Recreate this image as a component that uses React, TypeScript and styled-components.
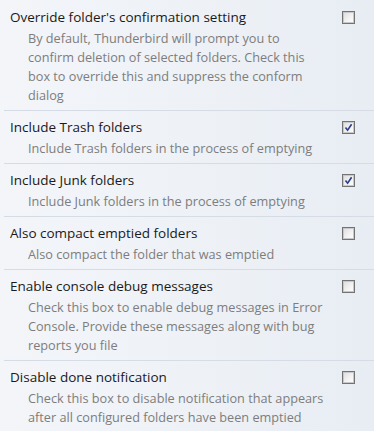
import React from 'react';
import styled, { createGlobalStyle } from 'styled-components';

const GlobalStyle = createGlobalStyle`
  html, body {
    margin: 0;
    padding: 0;
  }
  body {
    font-family: 'Open Sans', 'Noto Sans', sans-serif;
  }
`;

interface IOption {
  title: string;
  lines: string[];
  checked: boolean;
}

const options: IOption[] = [
  {
    title: "Override folder's confirmation setting",
    lines: [
      'By default, Thunderbird will prompt you to',
      'confirm deletion of selected folders. Check this',
      'box to override this and suppress the conform',
      'dialog',
    ],
    checked: false,
  },
  {
    title: 'Include Trash folders',
    lines: ['Include Trash folders in the process of emptying'],
    checked: true,
  },
  {
    title: 'Include Junk folders',
    lines: ['Include Junk folders in the process of emptying'],
    checked: true,
  },
  {
    title: 'Also compact emptied folders',
    lines: ['Also compact the folder that was emptied'],
    checked: false,
  },
  {
    title: 'Enable console debug messages',
    lines: [
      'Check this box to enable debug messages in Error',
      'Console. Provide these messages along with bug',
      'reports you file',
    ],
    checked: false,
  },
  {
    title: 'Disable done notification',
    lines: [
      'Check this box to disable notification that appears',
      'after all configured folders have been emptied',
    ],
    checked: false,
  },
];

function CheckBox({ checked }: { checked: boolean }): React.ReactElement {
  return (
    <Box>
      {checked && (
        <svg width="9" height="9" viewBox="0 0 9 9">
          <path d="M1.5 4.5 L3.6 7.2 L7.6 1.2" fill="none" stroke="#2b3d86" strokeWidth="1.6" />
        </svg>
      )}
    </Box>
  );
}

export default function App(): React.ReactElement {
  return (
    <>
      <GlobalStyle />
      <Page>
        {options.map((opt, i) => (
          <Row key={opt.title} $first={i === 0}>
            <Title>{opt.title}</Title>
            <CheckBox checked={opt.checked} />
            <Desc>
              {opt.lines.map((line) => (
                <Line key={line}>{line}</Line>
              ))}
            </Desc>
          </Row>
        ))}
      </Page>
    </>
  );
}

const Page = styled.div`
  width: 374px;
  height: 431px;
  overflow: hidden;
  background: linear-gradient(to right, #f3f5f9 0%, #edf1f6 60%, #e8edf4 100%);
`;

const Row = styled.div<{ $first: boolean }>`
  display: grid;
  grid-template-columns: 1fr auto;
  align-items: start;
  margin-left: 4px;
  padding: ${(p) => (p.$first ? '7px' : '6px')} 19px 5px 6px;
  border-top: ${(p) => (p.$first ? 'none' : '1px solid #d6dce5')};
`;

const Title = styled.div`
  color: #1a1a1a;
  font-size: 13.5px;
  line-height: 20px;
`;

const Box = styled.div`
  width: 11px;
  height: 11px;
  margin-top: 4px;
  border: 1px solid #737373;
  background: linear-gradient(135deg, #dcdcdc 0%, #f4f4f4 60%, #ffffff 100%);
  box-shadow: inset 0 0 0 1px #c8c8c8;
  display: flex;
  align-items: center;
  justify-content: center;
`;

const Desc = styled.div`
  grid-column: 1 / -1;
  padding-left: 18px;
  margin-top: 2px;
  color: #7d7d7d;
  font-size: 12.7px;
  line-height: 19px;
`;

const Line = styled.div`
  height: 19px;
  white-space: nowrap;
`;
